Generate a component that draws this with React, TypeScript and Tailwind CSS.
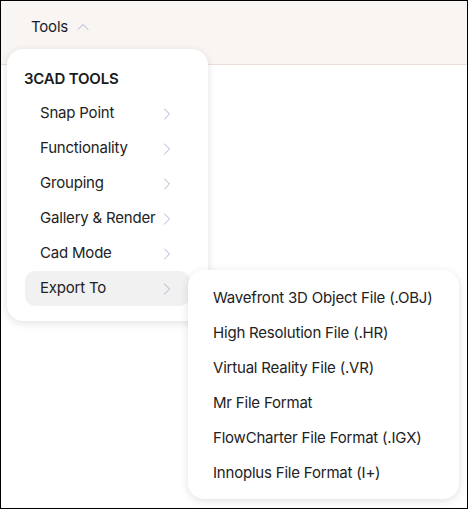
import { ChevronRight, ChevronUp } from "lucide-react";

const TOOLS = ["Snap Point", "Functionality", "Grouping", "Gallery & Render", "Cad Mode", "Export To"];

const EXPORTS = [
  "Wavefront 3D Object File (.OBJ)",
  "High Resolution File (.HR)",
  "Virtual Reality File (.VR)",
  "Mr File Format",
  "FlowCharter File Format (.IGX)",
  "Innoplus File Format (I+)",
];

export default function App() {
  return (
    <div
      className="relative w-[468px] h-[509px] overflow-hidden border border-black bg-white text-[#222]"
      style={{ fontFamily: "Inter, 'Noto Sans', sans-serif" }}
    >
      {/* Top bar */}
      <header className="h-[64px] bg-[#f8f5f2] border-b border-[#eaded9] flex items-center px-[30px] pb-[11px]">
        <button className="flex items-center gap-[5px] text-[15px] tracking-[-0.2px] text-[#1b1b2f]">
          Tools <ChevronUp className="w-[20px] h-[20px] text-[#a3a1c4]" strokeWidth={1} />
        </button>
      </header>

      {/* Tools menu */}
      <div className="absolute left-[6px] top-[48px] w-[201px] rounded-2xl bg-white shadow-[0_2px_8px_rgba(0,0,0,0.12)] px-[18px] pt-[13px] pb-[15px]">
        <div className="h-[34px] flex items-center -ml-[1px] text-[15px] font-semibold tracking-[-0.2px] text-[#1a1a1a]">3CAD TOOLS</div>
        {TOOLS.map((t) => (
          <div
            key={t}
            className={`h-[35px] flex items-center justify-between pl-[15px] pr-[14px] rounded-[10px] text-[15px] tracking-[-0.2px] ${t === "Export To" ? "bg-[#f1f1f1]" : ""}`}
          >
            <span className="whitespace-nowrap">{t}</span>
            <ChevronRight className="w-[20px] h-[20px] shrink-0 -mr-[1px] text-[#a3a1c4]" strokeWidth={1} />
          </div>
        ))}
      </div>

      {/* Export submenu */}
      <div className="absolute left-[187px] top-[269px] w-[271px] h-[229px] rounded-2xl bg-white shadow-[0_2px_8px_rgba(0,0,0,0.12)] px-[25px] pt-[11px] pb-[8px]">
        {EXPORTS.map((e) => (
          <div key={e} className="h-[35px] flex items-center text-[15px] tracking-[-0.2px] whitespace-nowrap">
            {e}
          </div>
        ))}
      </div>
    </div>
  );
}
